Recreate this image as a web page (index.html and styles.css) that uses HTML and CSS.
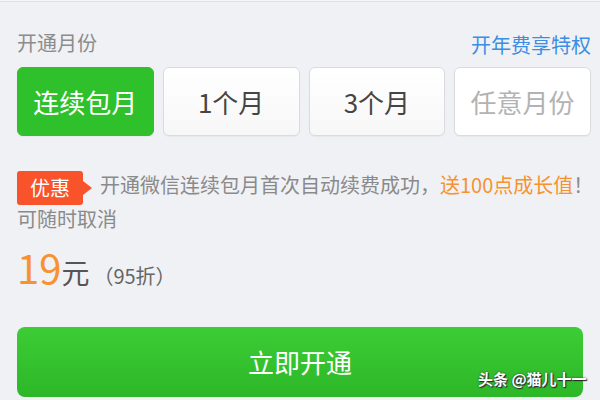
FILE: index.html
```html
<!DOCTYPE html>
<html>

<head>
    <meta charset='utf-8'>
    <title>开通月份</title>
    <meta name='viewport' content='width=device-width, initial-scale=1'>
    <link rel="stylesheet" href="styles.css">
</head>

<body>
    <div class="topbar"></div>
    <main class="page">
        <div class="head">
            <span class="title">开通月份</span>
            <a class="link" href="#">开年费享特权</a>
        </div>

        <div class="options">
            <button class="option active">连续包月</button>
            <button class="option">1个月</button>
            <button class="option">3个月</button>
            <button class="option custom">任意月份</button>
        </div>

        <p class="promo">
            <span class="tag">优惠</span>开通微信连续包月首次自动续费成功，<em>送100点成长值</em>！<br>可随时取消
        </p>

        <div class="price">
            <span class="num">19</span><span class="unit">元</span><span class="discount">（95折）</span>
        </div>

        <button class="submit">立即开通</button>
    </main>
    <span class="watermark">头条 @猫儿十一</span>
</body>

</html>
```

FILE: styles.css
```css
body,
html {
    margin: 0;
    padding: 0;
    width: 100%;
    height: 100%;
    background: #f0f1f5;
    font-family: "Noto Sans CJK SC", "Noto Sans", sans-serif;
    overflow: hidden;
}

body {
    position: relative;
}

.topbar {
    height: 1px;
    background: #f6f6f8;
    border-bottom: 1px solid #dfe0e4;
}

.page {
    padding: 0 9px 0 17px;
}

.head {
    display: flex;
    justify-content: space-between;
    align-items: flex-end;
    margin-top: 29px;
    height: 24px;
}

.title {
    font-size: 20px;
    line-height: 24px;
    color: #8c8c8c;
}

.link {
    font-size: 20px;
    line-height: 24px;
    color: #3c8ee2;
    text-decoration: none;
    margin-bottom: -2px;
}

.options {
    display: grid;
    grid-template-columns: repeat(4, 1fr);
    gap: 9px;
    margin-top: 12px;
}

.option {
    height: 69px;
    border: 1px solid #dadbdd;
    border-radius: 6px;
    background: linear-gradient(#ffffff, #f7f7f7);
    box-shadow: 0 1px 1px rgba(0, 0, 0, 0.04);
    font-family: inherit;
    font-size: 26px;
    color: #454545;
    padding: 0;
}

.option.active {
    background: #2ec12b;
    border-color: #2ec12b;
    color: #fff;
}

.option.custom {
    background: #fff;
    color: #b3b3b3;
}

.promo {
    margin: 33px 0 0;
    font-size: 20px;
    line-height: 32px;
    color: #8a8a8a;
    white-space: nowrap;
}

.promo em {
    font-style: normal;
    color: #f7922f;
}

.tag {
    position: relative;
    display: inline-block;
    height: 34px;
    line-height: 34px;
    padding: 0 13px;
    margin: -2px 17px -2px 0;
    vertical-align: middle;
    background: #f8532a;
    border-radius: 3px;
    color: #fff;
    font-size: 20px;
}

.tag::after {
    content: "";
    position: absolute;
    right: -9px;
    top: 10px;
    border-left: 9px solid #f8532a;
    border-top: 7px solid transparent;
    border-bottom: 7px solid transparent;
}

.price {
    margin-top: 8px;
    height: 48px;
    line-height: 48px;
    color: #555;
}

.num {
    font-size: 40px;
    color: #f7922f;
}

.unit {
    font-size: 28px;
    color: #555;
}

.discount {
    font-size: 20px;
    color: #666;
    margin-left: 4px;
}

.submit {
    display: block;
    width: 566px;
    height: 70px;
    margin-top: 36px;
    border: none;
    border-radius: 8px;
    background: linear-gradient(#3ccd35, #2db728);
    color: #fff;
    font-family: inherit;
    font-size: 26px;
}

.watermark {
    position: absolute;
    left: 478px;
    top: 368px;
    font-size: 15px;
    font-weight: bold;
    color: #fff;
    text-shadow: 0 0 2px #333, 1px 1px 1px #222;
}
```
